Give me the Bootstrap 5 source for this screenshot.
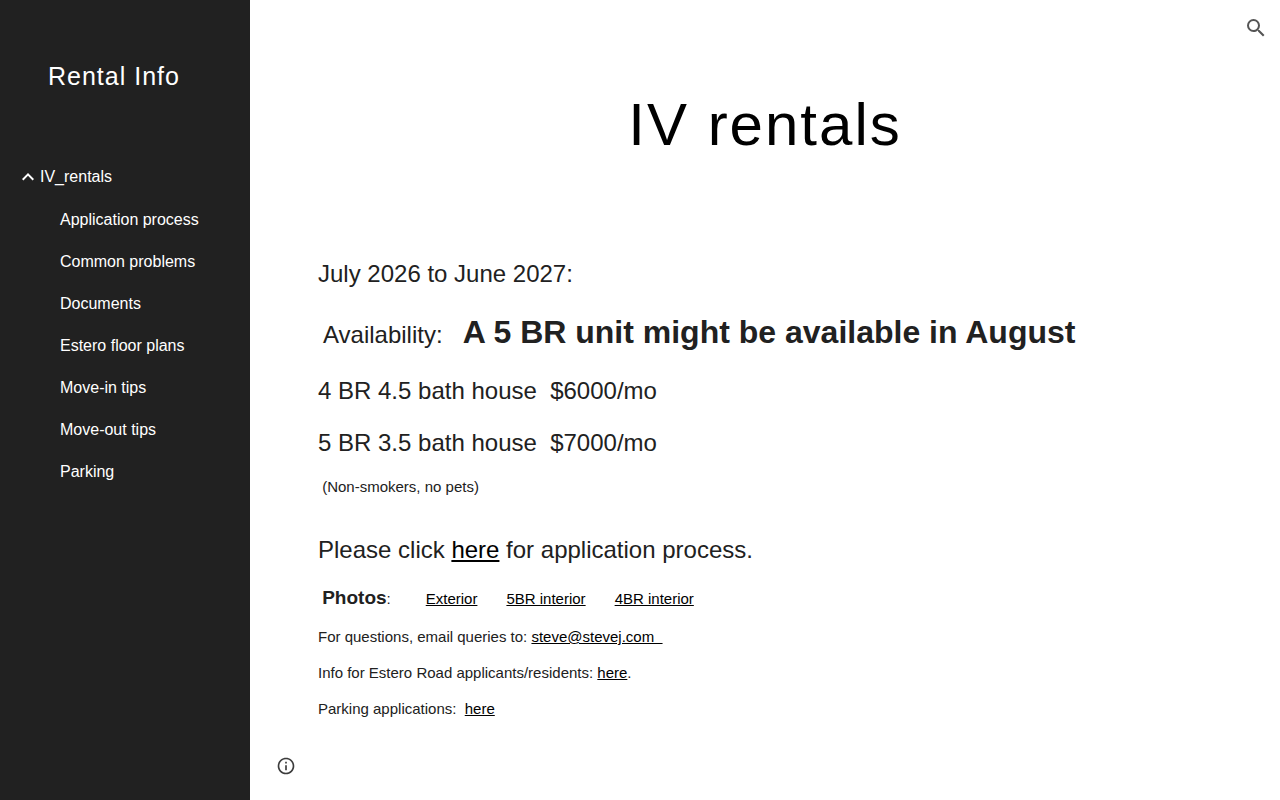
<!DOCTYPE html>
<html lang="en">
<head>
<meta charset="utf-8">
<meta name="viewport" content="width=device-width, initial-scale=1">
<title>Rental Info - IV rentals</title>
<link href="https://cdn.jsdelivr.net/npm/bootstrap@5.3.0/dist/css/bootstrap.min.css" rel="stylesheet">
<style>
  body { font-family: "Liberation Sans", Arial, sans-serif; font-size: 15px; line-height: 24px; color: #212121; background: #fff; }
  .site-sidebar { width: 250px; background: #212121; }
  .site-name { font-size: 25px; line-height: 32px; letter-spacing: 1px; margin: 60px 48px 64px; }
  .site-nav a { font-size: 16px; height: 42px; color: #fff; }
  .sub-pages { padding-top: 1px; }
  .page-title { font-size: 60px; line-height: 80px; letter-spacing: 2px; color: #000; margin: 60px 0 91px; }
  .site-main { padding-top: 25px; }
  .page-body { padding: 0 68px; }
  .page-body p { margin-bottom: 12px; white-space: pre-wrap; }
  .page-body a { color: #000; }
  .page-body .line-lg { font-size: 24px; line-height: 36px; margin-bottom: 16px; }
  .page-body .line-xl { line-height: 48px; margin-bottom: 14px; padding-left: 5px; }
  .page-body .line-md { line-height: 28px; }
  .page-body .line-gap { margin: -2px 0 33px; }
  .text-notice { font-size: 32px; }
  .text-photos { font-size: 19px; }
  .link-row { gap: 29px; margin-left: 35px; }
  .btn-icon { width: 48px; height: 48px; }
  .btn-search { position: absolute; top: 4px; right: 0; }
  .btn-info-page { margin: 20px 12px 10px; }
</style>
</head>
<body>
<div class="d-flex min-vh-100">
  <aside class="site-sidebar flex-shrink-0 text-white">
    <div class="site-name"><a href="#" class="text-white text-decoration-none text-nowrap">Rental Info</a></div>
    <nav class="site-nav nav flex-column flex-nowrap" aria-label="Pages">
      <div class="d-flex align-items-center">
        <button type="button" class="btn p-0 border-0 text-white d-flex ms-3" aria-label="Collapse IV_rentals" aria-expanded="true">
          <svg width="24" height="24" viewBox="0 0 24 24" fill="currentColor" aria-hidden="true"><path d="M12 8l-6 6 1.41 1.41L12 10.83l4.59 4.58L18 14z"/></svg>
        </button>
        <a href="#" class="d-flex align-items-center text-decoration-none" aria-current="page">IV_rentals</a>
      </div>
      <div class="sub-pages d-flex flex-column ms-5 ps-2">
        <a href="#" class="d-flex align-items-center text-decoration-none ps-1">Application process</a>
        <a href="#" class="d-flex align-items-center text-decoration-none ps-1">Common problems</a>
        <a href="#" class="d-flex align-items-center text-decoration-none ps-1">Documents</a>
        <a href="#" class="d-flex align-items-center text-decoration-none ps-1">Estero floor plans</a>
        <a href="#" class="d-flex align-items-center text-decoration-none ps-1">Move-in tips</a>
        <a href="#" class="d-flex align-items-center text-decoration-none ps-1">Move-out tips</a>
        <a href="#" class="d-flex align-items-center text-decoration-none ps-1">Parking</a>
      </div>
    </nav>
  </aside>
  <main class="site-main flex-grow-1 d-flex flex-column position-relative">
    <button type="button" class="btn btn-icon btn-search p-0 border-0 d-flex align-items-center justify-content-center" aria-label="Search this site">
      <svg width="24" height="24" viewBox="0 0 24 24" fill="#555" aria-hidden="true"><path d="M15.5 14h-.79l-.28-.27A6.471 6.471 0 0 0 16 9.5 6.5 6.5 0 1 0 9.5 16c1.61 0 3.09-.59 4.23-1.57l.27.28v.79l5 4.99L20.49 19l-4.99-5zm-6 0C7.01 14 5 11.99 5 9.5S7.01 5 9.5 5 14 7.01 14 9.5 11.99 14 9.5 14z"/></svg>
    </button>
    <h1 class="page-title fw-normal text-center">IV rentals</h1>
    <div class="page-body">
      <p class="line-lg">July 2026 to June 2027:</p>
      <p class="line-lg line-xl">Availability:&nbsp;&nbsp; <strong class="text-notice">A 5 BR unit might be available in August</strong></p>
      <p class="line-lg">4 BR 4.5 bath house&nbsp; $6000/mo</p>
      <p class="line-lg">5 BR 3.5 bath house&nbsp; $7000/mo</p>
      <p class="line-gap">&nbsp;(Non-smokers, no pets)</p>
      <p class="line-lg">Please click <a href="#">here</a> for application process.</p>
      <div class="d-flex align-items-baseline mb-2 pb-1">
        <p class="line-md mb-0">&nbsp;<strong class="text-photos">Photos</strong>:</p>
        <div class="link-row d-flex">
          <a href="#">Exterior</a>
          <a href="#">5BR interior</a>
          <a href="#">4BR interior</a>
        </div>
      </div>
      <p>For questions, email queries to: <a href="mailto:steve@stevej.com">steve@stevej.com&nbsp;&nbsp;</a></p>
      <p>Info for Estero Road applicants/residents: <a href="#">here</a>.</p>
      <p>Parking applications:&nbsp; <a href="#">here</a></p>
    </div>
    <button type="button" class="btn btn-icon btn-info-page p-0 border-0 d-flex align-items-center justify-content-center mt-auto" aria-label="Page details">
      <svg width="20" height="20" viewBox="0 0 24 24" fill="#3c3c3c" aria-hidden="true"><path d="M11 17h2v-6h-2v6zm1-15C6.48 2 2 6.48 2 12s4.48 10 10 10 10-4.48 10-10S17.52 2 12 2zm0 18c-4.41 0-8-3.59-8-8s3.59-8 8-8 8 3.59 8 8-3.59 8-8 8zM11 9h2V7h-2v2z"/></svg>
    </button>
  </main>
</div>
<script src="https://cdn.jsdelivr.net/npm/bootstrap@5.3.0/dist/js/bootstrap.bundle.min.js"></script>
</body>
</html>
